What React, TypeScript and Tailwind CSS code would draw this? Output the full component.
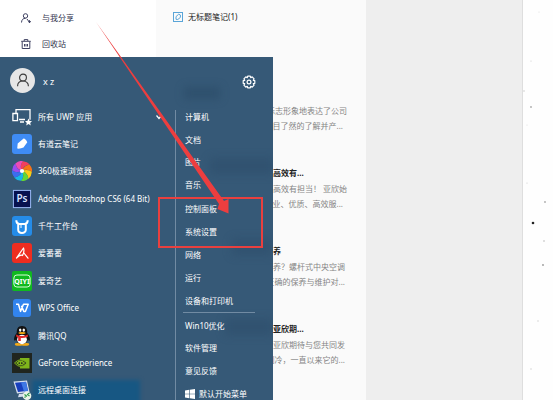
import type { ReactNode } from 'react';

type IconKind =
  | 'uwp' | 'note' | 'browser' | 'ps' | 'qianniu' | 'aifanfan'
  | 'iqiyi' | 'wps' | 'qq' | 'nvidia' | 'remote';

const apps: { icon: IconKind; label: string }[] = [
  { icon: 'uwp', label: '所有 UWP 应用' },
  { icon: 'note', label: '有道云笔记' },
  { icon: 'browser', label: '360极速浏览器' },
  { icon: 'ps', label: 'Adobe Photoshop CS6 (64 Bit)' },
  { icon: 'qianniu', label: '千牛工作台' },
  { icon: 'aifanfan', label: '爱番番' },
  { icon: 'iqiyi', label: '爱奇艺' },
  { icon: 'wps', label: 'WPS Office' },
  { icon: 'qq', label: '腾讯QQ' },
  { icon: 'nvidia', label: 'GeForce Experience' },
  { icon: 'remote', label: '远程桌面连接' },
];

const notes = [
  { title: '', lines: ['标志形象地表达了公司', '目了然的了解并产...'], pads: ['pr-0', 'pr-1'] },
  { title: '高效有...', lines: ['高效有担当！ 亚欣始', '业、优质、高效服...'], pads: ['pr-0', 'pr-1'] },
  { title: '养', lines: ['养？螺杆式中央空调', '正确的保养与维护对...'], pads: ['pr-0.5', 'pr-0.5'] },
  { title: '亚欣期...', lines: ['亚欣期待与您共同发', '制冷，一直以来它的...'], pads: ['pr-0.5', 'pr-0.5'] },
];

const wheel = ['#f43f5e', '#f97316', '#facc15', '#65d832', '#18b7e8', '#3b6df0', '#9b4df0', '#ee4bb5'];

const art: Record<IconKind, ReactNode> = {
  uwp: (
    <>
      <path d="M4 6V2.7h14v10M7 12.5h6M.9 6.5h4.6v7.2H.9zM8 15h4" fill="none" stroke="#fff" strokeWidth="1.3" />
      <path d="M16.5 11.5l1.1 2.4 2.4.2-1.8 1.8.6 2.6-2.3-1.4-2.3 1.4.6-2.6-1.8-1.8 2.4-.2z" fill="#fff" />
    </>
  ),
  note: (
    <>
      <rect width="20" height="20" rx="3" fill="#3f8cf5" />
      <path d="M5.2 14.6l.5-5.2 5.6-4.6c1-.7 2.5.6 4 3.5l-3.8 5.3c-2 .9-4 1.2-6.3 1z" fill="#fff" />
    </>
  ),
  browser: (
    <>
      {wheel.map((color, i) => (
        <path key={color} d="M10 10C8 6 9 2 11 .2a10 10 0 0 1 7 3.4C14 4 11 6 10 10z" fill={color} transform={`rotate(${i * 45} 10 10)`} />
      ))}
      <circle cx="10" cy="10" r="2.1" fill="#fff" />
    </>
  ),
  ps: (
    <>
      <rect x="1.4" y="1.4" width="17.2" height="17.2" fill="#07114f" stroke="#9bb9f5" strokeWidth="1" />
      <text x="10" y="13.3" textAnchor="middle" fontSize="10" fontWeight="600" fill="#d5e3ff">Ps</text>
    </>
  ),
  qianniu: (
    <>
      <rect width="20" height="20" rx="3" fill="#258ce8" />
      <path d="M4.3 4.2c0 3 1.3 3.7 3 3.7h5.4c1.7 0 3-.7 3-3.7M6.2 7.8v6c0 4.2 7.6 4.2 7.6 0v-6" fill="none" stroke="#fff" strokeWidth="2" />
      <path d="M9 9v3" stroke="#fff" strokeWidth="1" />
    </>
  ),
  aifanfan: (
    <>
      <rect width="20" height="20" rx="3" fill="#ee2d20" />
      <path d="M4.500 15L11.500 5c.8 2 .3 5-1 7.500-1.800-1-4 .5-6 2.500M12.300 10.500l3.700 4.700" fill="none" stroke="#fff" strokeWidth="1.200" strokeLinecap="round" strokeLinejoin="round" />
    </>
  ),
  iqiyi: (
    <>
      <rect width="20" height="20" rx="2" fill="#0fb91f" />
      <rect x="1.900" y="4" width="16.200" height="12" rx="3" fill="none" stroke="#d9ffd9" strokeWidth="1" />
      <text x="10" y="12.700" textAnchor="middle" fontSize="7" fontWeight="700" fill="#fff">QIYI</text>
    </>
  ),
  wps: (
    <>
      <rect x="1" y="1" width="18" height="18" rx="3" fill="#3284ee" />
      <path d="M4 6.2h2.5l2 7.2 3-7.2h4.700l-2.800 7.200h-1.600L9.400 7.700" fill="none" stroke="#fff" strokeWidth="1.500" strokeLinejoin="round" />
    </>
  ),
  qq: (
    <>
      <ellipse cx="6.800" cy="18.300" rx="4" ry="1.500" fill="#f4aa19" />
      <ellipse cx="13.200" cy="18.300" rx="4" ry="1.500" fill="#f4aa19" />
      <path d="M10 0c4 0 5.500 2.800 5.200 7 2 2 3.400 5.800 2.400 7.500-.5.6-1.400-.5-1.800-1-.6 6-11 6-11.600 0-.4.5-1.300 1.600-1.800 1-1-1.700.4-5.500 2.400-7.500C4.500 2.800 6 0 10 0z" fill="#111" />
      <ellipse cx="10" cy="13.500" rx="4.900" ry="4.700" fill="#fff" />
      <ellipse cx="8.200" cy="4.100" rx="1.200" ry="1.600" fill="#fff" />
      <ellipse cx="11.800" cy="4.100" rx="1.200" ry="1.600" fill="#fff" />
      <ellipse cx="10" cy="7" rx="3.500" ry="1.100" fill="#f7a913" />
      <path d="M4.200 8.600q5.800 3 11.600 0v2.200q-3.800 1.600-7 1.200V15H6.200v-3.600l-2-1z" fill="#e3292a" />
    </>
  ),
  nvidia: (
    <>
      <rect width="20" height="20" fill="#20251f" />
      <path d="M8 5h9.500v10.500H8z" fill="#7fb51b" />
      <path d="M2.500 10Q8.500 3.500 15 10Q8.500 17 2.500 10z" fill="#20251f" stroke="#7fb51b" strokeWidth="1" />
      <path d="M5 10Q8.500 6.500 12.300 10Q8.500 13.600 5 10zM8.500 8.500v3" fill="none" stroke="#7fb51b" strokeWidth="1.200" />
    </>
  ),
  remote: (
    <>
      <path d="M1.500 1.500L15 .5l2.500 11.500-12.500 1.500z" fill="#d5deee" />
      <path d="M3 2.700l11-.9 2 9-10 1.200z" fill="#183fbd" />
      <path d="M9 2.300l5-.4 2 9-4 .5z" fill="#3f78e4" />
      <path d="M7 14l5-.5v3l-6 .7z" fill="#d5deee" />
      <circle cx="15" cy="15.700" r="4.300" fill="#eaf4e8" />
      <path d="M12.500 14.500l2 1.500-2 1.500M17.500 13l-2 1.500 2 1.500" fill="none" stroke="#269947" strokeWidth="1.100" />
    </>
  ),
};

function AppIcon({ kind }: { kind: IconKind }) {
  return (
    <svg viewBox="0 0 20 20" className="size-5 shrink-0" aria-hidden="true">
      {art[kind]}
    </svg>
  );
}

function MenuGroup({ items, className }: { items: string[]; className: string }) {
  return (
    <ul className={`grid auto-rows-fr ${className}`}>
      {items.map((item) => (
        <li key={item} className="flex items-center">
          <button type="button" className="whitespace-nowrap">{item}</button>
        </li>
      ))}
    </ul>
  );
}

function StartMenu() {
  return (
    <section className="absolute left-0 top-[57px] bottom-0 w-[273px] overflow-hidden bg-[#365977] text-white" aria-label="开始菜单">
      <div className="absolute left-[184px] top-[30px] h-3 w-9 bg-[#24435f]/40 blur-[4px]" />
      <div className="absolute left-[210px] top-[101px] h-4 w-16 bg-[#24435f]/30 blur-[5px]" />
      <div className="absolute left-[232px] top-[182px] h-4 w-10 bg-[#24435f]/30 blur-[5px]" />
      <div className="absolute left-[225px] top-[262px] h-4 w-12 bg-[#24435f]/30 blur-[5px]" />
      <div className="absolute left-8 top-[323px] h-8 w-[108px] bg-[#175783] blur-[2px]" />
      <header className="relative flex h-[46px] items-center justify-between pl-[10px] pr-[17px]">
        <div className="flex items-center gap-2">
          <span className="flex size-[25px] items-center justify-center rounded-full bg-[#e6e6e6]">
            <svg viewBox="0 0 16 16" className="size-[14px]" fill="none" stroke="#3c3c3c" strokeWidth="1.300" aria-hidden="true">
              <circle cx="8" cy="5.200" r="3.900" />
              <path d="M1.800 15c0-3.700 2.600-5.900 6.200-5.900s6.200 2.200 6.200 5.900" />
            </svg>
          </span>
          <span className="pt-1 text-[9px]">x z</span>
        </div>
        <button type="button" aria-label="设置" className="pt-1">
          <svg viewBox="0 0 14 14" className="size-3.5" fill="none" stroke="#fff" strokeLinejoin="round" aria-hidden="true">
            <path d="M5.700 1.200h2.600l.4 1.500 1.500-.8 1.900 1.900-.8 1.500 1.500.4v2.600l-1.500.4.8 1.500-1.900 1.900-1.500-.8-.4 1.500H5.700l-.4-1.500-1.500.8-1.900-1.900.8-1.500-1.500-.4V5.700l1.500-.4-.8-1.500 1.900-1.900 1.500.8z" strokeWidth="1.200" />
            <circle cx="7" cy="7" r="1.900" strokeWidth="1.200" />
          </svg>
        </button>
      </header>
      <div className="relative flex">
        <ul className="grid h-[301px] w-[175px] auto-rows-fr pl-3">
          {apps.map((app) => (
            <li key={app.label} className="flex items-center">
              <button type="button" className="flex w-full items-center gap-[6px] whitespace-nowrap text-left">
                <AppIcon kind={app.icon} />
                <span>{app.label}</span>
                {app.icon === 'uwp' && (
                  <svg viewBox="0 0 8 8" className="ml-auto mr-3 size-2" fill="none" stroke="#fff" strokeWidth="1.200" aria-hidden="true">
                    <path d="M1.500 2.500L4 5.500l2.500-3" />
                  </svg>
                )}
              </button>
            </li>
          ))}
        </ul>
        <div className="mt-[7px] w-px bg-[#718ba3]" />
        <div className="flex flex-col pl-[9px] pt-[3px]">
          <MenuGroup className="h-[90px]" items={['计算机', '文档', '图片', '音乐']} />
          <MenuGroup className="mt-[2px] h-[114px]" items={['控制面板', '系统设置', '网络', '运行', '设备和打印机']} />
          <hr className="-ml-[2px] w-[72px] border-[#718ba3]" />
          <MenuGroup className="mt-[2px] h-[67px]" items={['Win10优化', '软件管理', '意见反馈']} />
          <button type="button" className="flex h-[23px] items-center gap-1 whitespace-nowrap">
            <svg viewBox="0 0 10 10" className="size-[10px]" fill="#fff" aria-hidden="true">
              <path d="M0 1.400l4.300-.6v3.900H0zM4.900.7L10 0v4.700H4.900zM0 5.300h4.300v3.900L0 8.600zM4.900 5.300H10V10l-5.100-.7z" />
            </svg>
            默认开始菜单
          </button>
        </div>
      </div>
    </section>
  );
}

function Annotation() {
  return (
    <svg className="pointer-events-none absolute left-0 top-0 h-[260px] w-[280px]" viewBox="0 0 280 260" aria-hidden="true">
      <rect x="159" y="198" width="103" height="49" fill="none" stroke="#e9403f" strokeWidth="2" />
      <path d="M96 22L224 201L228.500 199L228.500 213.500L217.500 209L219 204z" fill="#ed3e3f" />
    </svg>
  );
}

const specks = [[8, 61, 0.6, '#ccc'], [8, 107, 0.9, '#aaa'], [1, 91, 0.8, '#ccc'], [22, 202, 0.9, '#aaa'], [10, 223, 1.3, '#222'], [21, 241, 0.7, '#aaa'], [20, 265, 0.9, '#999'], [4, 183, 0.6, '#ccc'], [15, 321, 0.7, '#ccc'], [8, 369, 0.7, '#ccc'], [16, 12, 0.6, '#ddd'], [4, 125, 0.6, '#ddd']] as const;

export default function App() {
  return (
    <main lang="zh-CN" className="relative flex h-screen w-full overflow-hidden bg-white font-['Noto_Sans','Noto_Sans_CJK_SC',sans-serif] text-[8px] leading-3">
      <nav className="flex w-39 shrink-0 flex-col gap-[14px] pl-[21px] pt-3 text-[#33364f]">
        <a href="#shared" className="flex items-center gap-[11px]">
          <svg viewBox="0 0 10 10" className="size-[10px]" fill="none" stroke="#3f4262" aria-hidden="true">
            <circle cx="4.500" cy="2.900" r="2.200" />
            <path d="M.5 9.500c.2-2.800 1.500-4.200 4-4.200M6 6l1.500 2M7 8.700h3M8.500 7.200v3" />
          </svg>
          与我分享
        </a>
        <a href="#trash" className="flex items-center gap-[11px]">
          <svg viewBox="0 0 10 10" className="size-[10px]" fill="none" stroke="#3f4262" aria-hidden="true">
            <path d="M1.200 2.500v7h7.600v-7M.2 2.300h9.600M3.200 2V.6h3.600V2M3.500 5v2.500M5 5v2.500M6.500 5v2.500" />
          </svg>
          回收站
        </a>
      </nav>
      <section className="w-[210px] shrink-0 bg-[#fafafa] pt-[11px]" aria-label="笔记">
        <a href="#note" className="flex items-center gap-[5px] pl-[17px] text-[#222]">
          <svg viewBox="0 0 10 10" className="size-[10px]" fill="none" stroke="#5aa5d8" aria-hidden="true">
            <rect x=".5" y=".5" width="9" height="9" />
            <path d="M3 7.300V4.600L5.700 2.200 7.400 3v2.400L4.800 7.500z" />
          </svg>
          无标题笔记(1)
        </a>
        <div className="flex flex-col pr-[19px] pt-[64px] text-right text-[#858585]">
          {notes.map((note) => (
            <article key={note.lines[0]} className="h-[78px] whitespace-nowrap">
              <h2 className="h-[18px] pl-[117px] pt-[2px] text-left font-bold text-[#222]">{note.title}</h2>
              <p className={`h-[15px] ${note.pads[0]}`}>{note.lines[0]}</p>
              <p className={`h-[15px] ${note.pads[1]}`}>{note.lines[1]}</p>
            </article>
          ))}
        </div>
      </section>
      <div className="flex-1 border-r border-[#dedede] bg-[#eeeeee]" />
      <aside className="w-[30px] shrink-0 bg-[#fefefe]">
        <svg viewBox="0 0 30 400" className="h-[400px] w-full" aria-hidden="true">
          {specks.map(([x, y, r, fill]) => (
            <circle key={y} cx={x} cy={y} r={r} fill={fill} />
          ))}
        </svg>
      </aside>
      <StartMenu />
      <Annotation />
    </main>
  );
}
